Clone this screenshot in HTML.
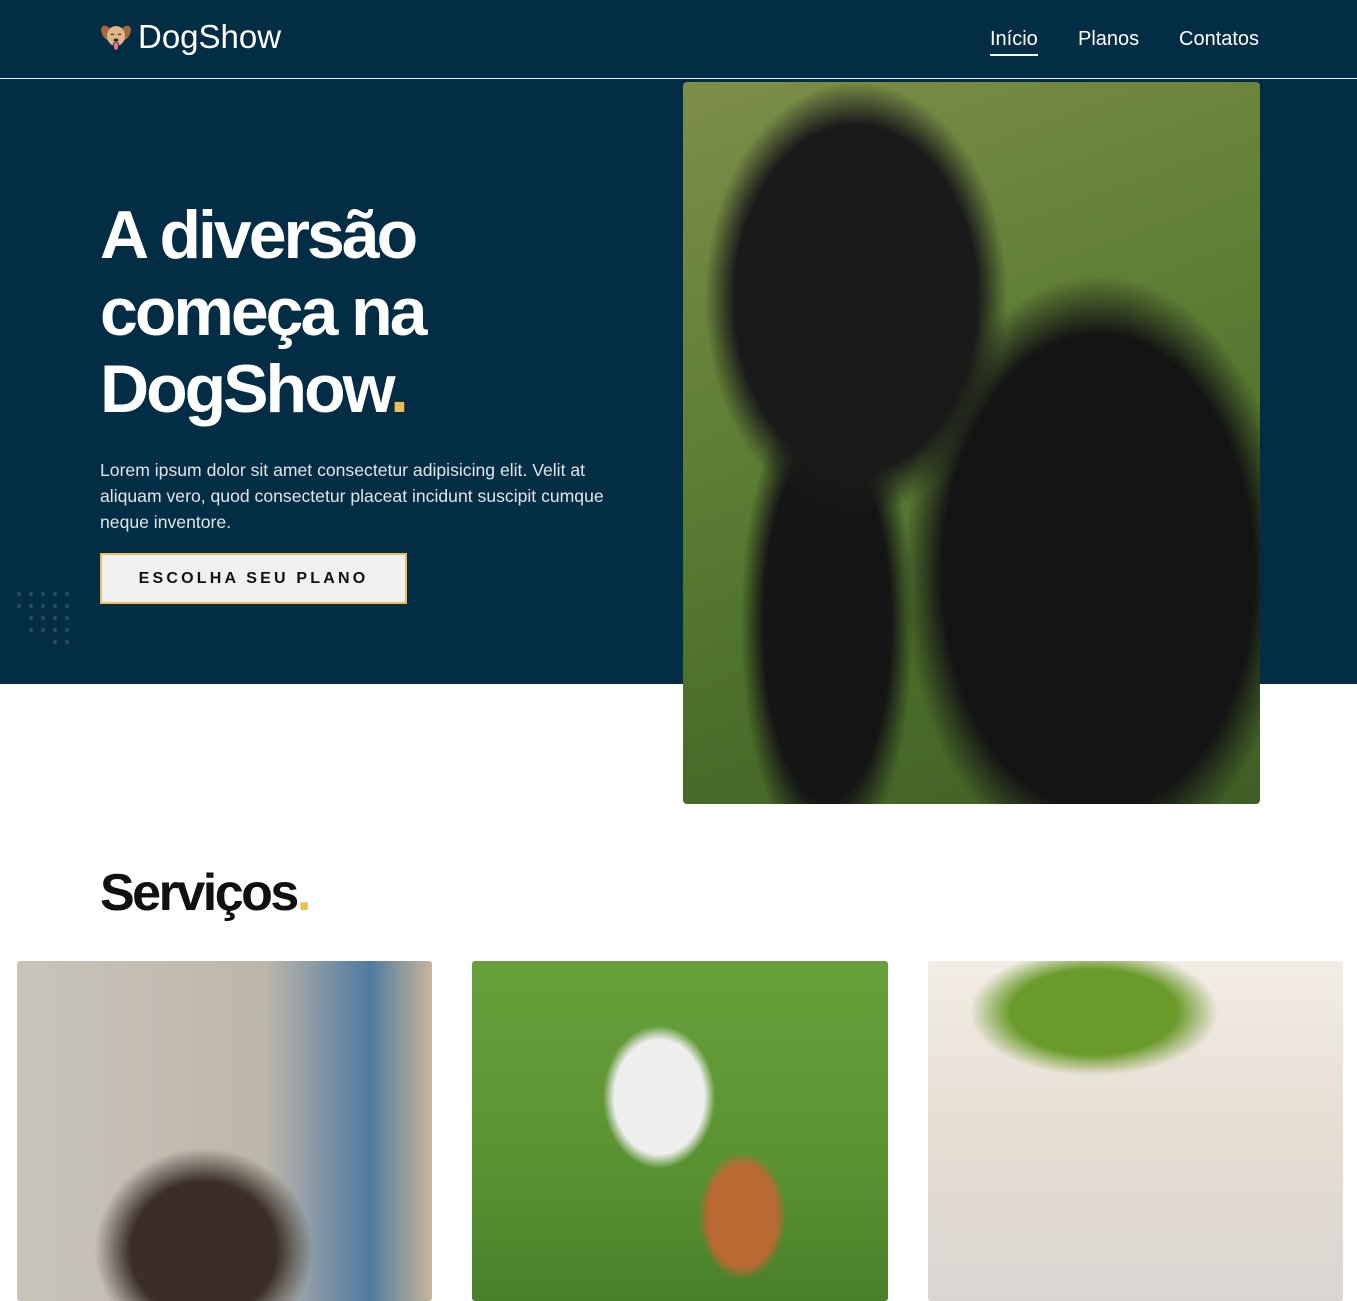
<!DOCTYPE html>
<html><head><meta charset="utf-8"><style>
*{margin:0;padding:0;box-sizing:border-box}
body{width:1357px;height:1293px;overflow:hidden;background:#fff;font-family:"Liberation Sans",Arial,sans-serif;position:relative}
.hero{position:absolute;left:0;top:0;width:1357px;height:684px;background:#022d45}
.hdr{position:absolute;left:0;top:0;width:1357px;height:79px;border-bottom:1px solid #e8eef2}
.logo{position:absolute;left:100px;top:18px;color:#fff;font-size:33px;display:flex;align-items:center;gap:6px}
.nav a{position:absolute;top:28px;color:#fff;font-size:20px;text-decoration:none}
h1{position:absolute;left:100px;top:197px;color:#fff;font-size:68px;line-height:77px;font-weight:bold;letter-spacing:-3px}
.dot{color:#e9bf5b}
p.lead{position:absolute;left:100px;top:457px;width:548px;color:#dfe6ea;font-size:17.6px;line-height:26px}
.btn{position:absolute;left:100px;top:553px;width:307px;height:51px;background:#f0f0f0;border:2px solid #e9bf5b;font-size:16px;font-weight:bold;letter-spacing:3.2px;text-align:center;line-height:47px;color:#111}
.dots{position:absolute;left:17px;top:592px}
.dots i{position:absolute;width:4px;height:4px;border-radius:50%;background:#2e4d5f}
.himg{position:absolute;left:683px;top:82px;width:577px;height:722px;border-radius:4px;overflow:hidden;
background:radial-gradient(ellipse 45% 55% at 72% 68%,#141414 60%,transparent 75%),radial-gradient(ellipse 35% 40% at 30% 30%,#1a1a1a 60%,transparent 75%),radial-gradient(ellipse 20% 45% at 25% 75%,#151515 55%,transparent 75%),linear-gradient(160deg,#7d8d4a,#5e7f35 40%,#4b6e2a 70%,#3f5e25)}
h2{position:absolute;left:100px;top:863px;font-size:52px;font-weight:bold;color:#111;letter-spacing:-2.5px}
.card{position:absolute;top:961px;height:340px;border-radius:3px}
</style></head><body>
<div class="hero"></div>
<div class="hdr"></div>
<div class="logo"><svg width="32" height="32" viewBox="0 0 32 32"><ellipse cx="7" cy="12" rx="5" ry="8" fill="#a8693a" transform="rotate(-30 7 12)"/><ellipse cx="25" cy="12" rx="5" ry="8" fill="#a8693a" transform="rotate(30 25 12)"/><ellipse cx="16" cy="15" rx="9" ry="10" fill="#e3b48a"/><path d="M11 14q2-2 3 0M18 14q2-2 3 0" stroke="#222" fill="none"/><ellipse cx="16" cy="19" rx="2.5" ry="1.5" fill="#222"/><rect x="13.5" y="21" width="5" height="8" rx="2.5" fill="#e07a9a" stroke="#222" stroke-width=".8"/></svg>DogShow</div>
<div class="nav"><a style="left:990px;border-bottom:2px solid #fff;padding-bottom:3px">Início</a><a style="left:1078px">Planos</a><a style="left:1179px">Contatos</a></div>
<h1>A diversão<br>começa na<br>DogShow<span class="dot">.</span></h1>
<p class="lead">Lorem ipsum dolor sit amet consectetur adipisicing elit. Velit at aliquam vero, quod consectetur placeat incidunt suscipit cumque neque inventore.</p>
<div class="btn">ESCOLHA SEU PLANO</div>
<div class="dots">
<i style="left:0;top:0"></i><i style="left:12px;top:0"></i><i style="left:24px;top:0"></i><i style="left:36px;top:0"></i><i style="left:48px;top:0"></i>
<i style="left:0;top:12px"></i><i style="left:12px;top:12px"></i><i style="left:24px;top:12px"></i><i style="left:36px;top:12px"></i><i style="left:48px;top:12px"></i>
<i style="left:12px;top:24px"></i><i style="left:24px;top:24px"></i><i style="left:36px;top:24px"></i><i style="left:48px;top:24px"></i>
<i style="left:12px;top:36px"></i><i style="left:24px;top:36px"></i><i style="left:36px;top:36px"></i><i style="left:48px;top:36px"></i>
<i style="left:36px;top:48px"></i><i style="left:48px;top:48px"></i></div>
<div class="himg"></div>
<h2>Serviços<span class="dot">.</span></h2>
<div class="card" style="left:17px;width:415px;background:radial-gradient(ellipse 35% 40% at 45% 85%,#3a2e26 50%,transparent 75%),linear-gradient(90deg,#c9c4bb,#bdb6aa 60%,#4f7aa0 85%,#c8b59c)"></div>
<div class="card" style="left:472px;width:416px;background:radial-gradient(ellipse 18% 28% at 45% 40%,#eee 60%,transparent 75%),radial-gradient(ellipse 14% 25% at 65% 75%,#b86a32 60%,transparent 75%),linear-gradient(180deg,#67a03a,#5a9232 60%,#4a7f2a)"></div>
<div class="card" style="left:928px;width:415px;background:radial-gradient(ellipse 40% 25% at 40% 15%,#6a9a2a 50%,transparent 75%),linear-gradient(180deg,#f2ede5,#e7ddd2 50%,#d9d6d2)"></div>
</body></html>
